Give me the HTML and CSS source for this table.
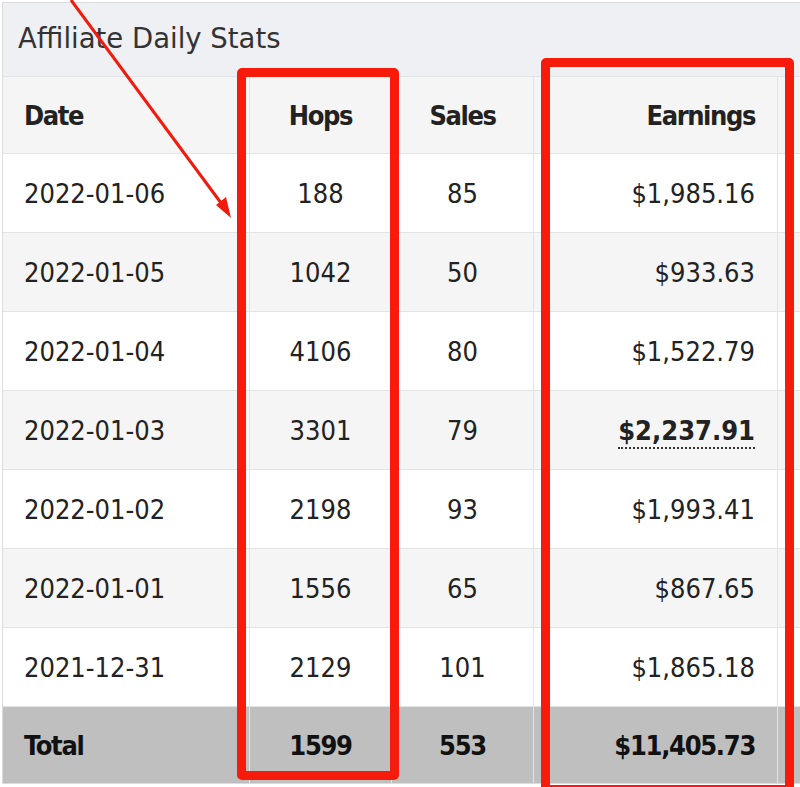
FILE: index.html
```html
<!DOCTYPE html>
<html lang="en">
<head>
<meta charset="utf-8">
<title>Affiliate Daily Stats</title>
<link rel="stylesheet" href="styles.css">
</head>
<body>
<div class="stage">
  <section class="panel">
    <h2 class="panel-title">Affiliate Daily Stats</h2>
    <table class="stats">
      <colgroup>
        <col class="c-date">
        <col class="c-hops">
        <col class="c-sales">
        <col class="c-earn">
        <col class="c-extra">
      </colgroup>
      <thead>
        <tr>
          <th class="left">Date</th>
          <th>Hops</th>
          <th>Sales</th>
          <th class="right">Earnings</th>
          <th></th>
        </tr>
      </thead>
      <tbody>
        <tr><td class="left">2022-01-06</td><td>188</td><td>85</td><td class="right">$1,985.16</td><td></td></tr>
        <tr><td class="left">2022-01-05</td><td>1042</td><td>50</td><td class="right">$933.63</td><td></td></tr>
        <tr><td class="left">2022-01-04</td><td>4106</td><td>80</td><td class="right">$1,522.79</td><td></td></tr>
        <tr><td class="left">2022-01-03</td><td>3301</td><td>79</td><td class="right"><abbr class="best" title="Best day">$2,237.91</abbr></td><td></td></tr>
        <tr><td class="left">2022-01-02</td><td>2198</td><td>93</td><td class="right">$1,993.41</td><td></td></tr>
        <tr><td class="left">2022-01-01</td><td>1556</td><td>65</td><td class="right">$867.65</td><td></td></tr>
        <tr><td class="left">2021-12-31</td><td>2129</td><td>101</td><td class="right">$1,865.18</td><td></td></tr>
      </tbody>
      <tfoot>
        <tr><td class="left">Total</td><td>1599</td><td>553</td><td class="right">$11,405.73</td><td></td></tr>
      </tfoot>
    </table>
  </section>

  <div class="mark mark-hops"></div>
  <div class="mark mark-earn"></div>
  <svg class="arrow" width="260" height="240" viewBox="0 0 260 240" aria-hidden="true">
    <line x1="71" y1="0" x2="224" y2="207" stroke="#f21a0c" stroke-width="3"/>
    <polygon points="231,218 216,205 226,197" fill="#f21a0c"/>
  </svg>
</div>
</body>
</html>
```

FILE: styles.css
```css
html, body {
  margin: 0;
  padding: 0;
  background: #ffffff;
  overflow: hidden;
}

.stage {
  position: relative;
  width: 800px;
  height: 787px;
  overflow: hidden;
  padding: 2px 0 0 2px;
  box-sizing: border-box;
}

.panel {
  width: 900px;
  border: 1px solid #dcdcdc;
  background: #ffffff;
}

.panel-title {
  margin: 0;
  height: 74px;
  padding: 0 0 3px 15px;
  box-sizing: border-box;
  display: flex;
  align-items: center;
  background: #eef0f4;
  border-bottom: 1px solid #e1e3e6;
  font-family: "DejaVu Sans", Verdana, sans-serif;
  font-weight: normal;
  font-size: 27.5px;
  color: #333333;
}

.stats {
  border-collapse: separate;
  border-spacing: 0;
  table-layout: fixed;
  width: 900px;
  font-family: "DejaVu Sans Condensed", "DejaVu Sans", sans-serif;
  font-size: 27px;
  color: #222222;
}

.c-date { width: 247px; }
.c-hops { width: 142px; }
.c-sales { width: 142px; }
.c-earn { width: 244px; }
.c-extra { width: 125px; }

.stats th,
.stats td {
  height: 79px;
  padding: 0 22px;
  box-sizing: border-box;
  border-right: 1px solid #e3e3e3;
  border-bottom: 1px solid #e3e3e3;
  text-align: center;
  vertical-align: middle;
  white-space: nowrap;
}

.stats th {
  height: 77px;
  font-weight: bold;
  background: #f5f5f5;
  color: #222222;
  letter-spacing: -1.4px;
}

.stats .left { text-align: left; padding-left: 21px; }
.stats .right { text-align: right; padding-right: 22px; }

.stats tbody tr:nth-child(odd) td { background: #ffffff; }
.stats tbody tr:nth-child(even) td { background: #f5f5f5; }

.stats tfoot td {
  height: 76px;
  background: #bfbfbf;
  font-weight: bold;
  color: #111111;
  border-bottom: none;
  letter-spacing: -1.3px;
}

.best {
  font-weight: bold;
  text-decoration: none;
  border-bottom: 2px dotted #333333;
  padding-bottom: 1px;
}

.mark {
  position: absolute;
  border: 9px solid #f71b0b;
  border-radius: 5px;
  box-sizing: border-box;
}

.mark-hops {
  left: 237px;
  top: 68px;
  width: 162px;
  height: 712px;
}

.mark-earn {
  left: 541px;
  top: 58px;
  width: 253px;
  height: 736px;
}

.arrow {
  position: absolute;
  left: 0;
  top: 0;
}
```
